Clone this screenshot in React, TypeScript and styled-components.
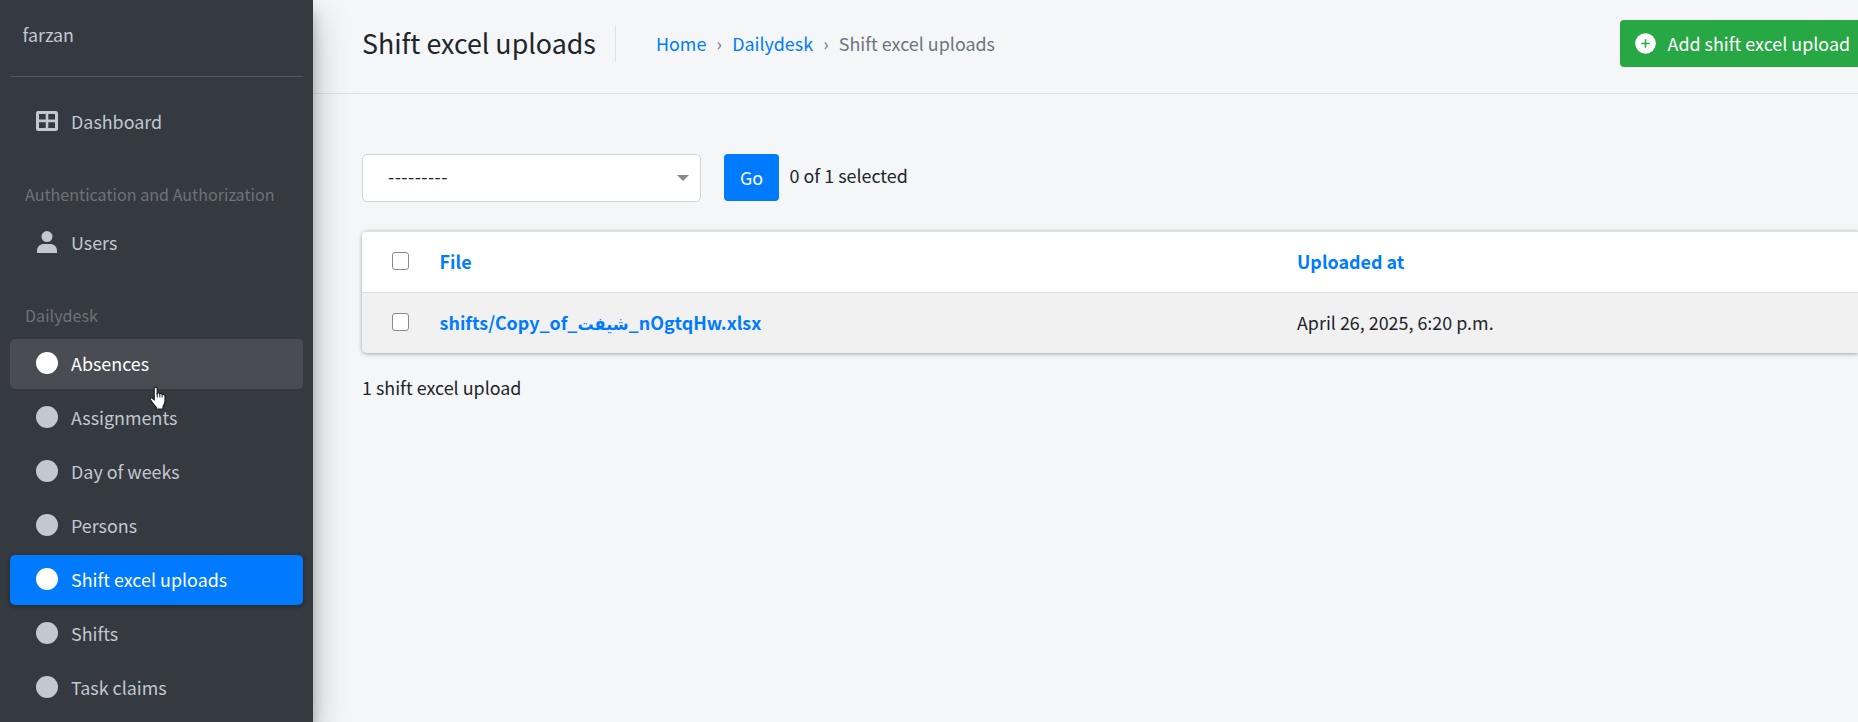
import React from "react";
import styled, { createGlobalStyle, css } from "styled-components";

const GlobalStyle = createGlobalStyle`
  *, *::before, *::after { box-sizing: border-box; }
  html, body, #root { height: 100%; }
  body {
    margin: 0;
    overflow: hidden;
    background: #f4f6f8;
    color: #212529;
    font-family: "Source Sans Pro", "Noto Sans CJK SC", "DejaVu Sans Condensed", "DejaVu Sans", sans-serif;
    font-size: 17.9px;
    line-height: 30px;
  }
  a { color: #007bff; text-decoration: none; }
`;

const Shell = styled.div`
  display: flex;
  height: 722px;
  width: 1858px;
  overflow: hidden;
`;

const Sidebar = styled.aside`
  position: relative;
  z-index: 1;
  flex: 0 0 313px;
  padding: 0 10px;
  background: #343a40;
  color: #c2c7d0;
  box-shadow: 0 17px 35px rgba(0, 0, 0, 0.25), 0 12px 12px rgba(0, 0, 0, 0.22);
`;

const UserPanel = styled.div`
  height: 77px;
  padding: 19px 12.6px 0;
  border-bottom: 1px solid #4f5962;
`;

const NavItem = styled.a<{ $state?: "hover" | "active" }>`
  display: flex;
  align-items: center;
  height: 50px;
  margin-bottom: 4px;
  padding: 0 0 2px 26px;
  gap: 13px;
  border-radius: 5px;
  color: #c2c7d0;
  svg { display: block; flex: none; margin-bottom: 1px; }
  ${(p) => p.$state === "hover" && css`
    background: #494d53;
    color: #fff;
  `}
  ${(p) => p.$state === "active" && css`
    background: #007bff;
    color: #fff;
    box-shadow: 0 1px 4px rgba(0, 0, 0, 0.4);
  `}
`;

const Nav = styled.nav`
  padding-top: 20px;
`;

const NavHeader = styled.div`
  height: 67px;
  padding: 28px 15px 0;
  color: #6c7277;
  font-size: 16.12px;
  line-height: 30px;
`;

const Cursor = styled.svg`
  position: absolute;
  left: 149px;
  top: 386px;
`;

const Main = styled.main`
  flex: 1;
  min-width: 0;
`;

const Header = styled.header`
  display: flex;
  align-items: flex-start;
  height: 94px;
  padding-left: 49px;
  border-bottom: 1px solid #dee2e6;
`;

const Title = styled.h1`
  margin: 25px 0 0;
  width: 254px;
  height: 37px;
  border-right: 1px solid #dee2e6;
  font-size: 26.8px;
  font-weight: 400;
  line-height: 36px;
  white-space: nowrap;
`;

const Breadcrumb = styled.div`
  display: flex;
  flex: 1;
  gap: 10.2px;
  margin: 28px 0 0 40px;
  color: #6c757d;
  white-space: nowrap;
`;

const AddButton = styled.a`
  display: flex;
  align-items: center;
  flex: 0 0 260px;
  width: 260px;
  height: 47px;
  margin: 20px -22px 0 0;
  padding: 0 0 2px 15px;
  gap: 11.5px;
  border-radius: 4px;
  background: #28a745;
  && { color: #fff; }
  white-space: nowrap;
  svg { margin-top: 1px; }
`;

const Content = styled.section`
  padding: 60px 0 0 49px;
`;

const Actions = styled.div`
  display: flex;
  align-items: flex-start;
`;

const Select = styled.div`
  display: flex;
  align-items: center;
  justify-content: space-between;
  width: 339px;
  height: 48px;
  padding: 0 11px 5px 25px;
  border: 1px solid #ced4da;
  border-radius: 5px;
  background: #fff;
  letter-spacing: 0.45px;
`;

const Arrow = styled.i`
  border: 6px solid transparent;
  border-top-color: #888;
  border-bottom: 0;
  margin-top: 4px;
`;

const GoButton = styled.a`
  width: 55px;
  height: 47px;
  margin: 0 10.6px 0 23px;
  border-radius: 4px;
  background: #007bff;
  && { color: #fff; }
  line-height: 47px;
  text-align: center;
`;

const Counter = styled.span`
  padding-top: 6px;
`;

const Table = styled.div`
  margin: 29px 0 19px;
  border-radius: 5px 0 0 5px;
  background: #fff;
  box-shadow: 0 0 1px rgba(0, 0, 0, 0.2), 0 1px 4px rgba(0, 0, 0, 0.32);
  overflow: hidden;
`;

const Row = styled.div<{ $shaded?: boolean }>`
  display: grid;
  grid-template-columns: 77.600px 857.400px 1fr;
  align-items: center;
  height: 61px;
  padding-bottom: 2px;
  background: ${(p) => (p.$shaded ? "#f1f1f1" : "#fff")};
  border-top: 1px solid #dee2e6;
`;

const Bold = styled.a`
  font-weight: 700;
`;

const Check = styled.span`
  width: 17px;
  height: 18px;
  margin-left: 30px;
  border: 1px solid #8a8a8a;
  border-radius: 3px;
  background: #fff;
`;

const Footer = styled.div``;

const Circle = () => (
  <svg width="22" height="22" viewBox="0 0 22 22">
    <circle cx="11" cy="11" r="11" fill="currentColor" />
  </svg>
);

const GridIcon = () => (
  <svg width="22" height="20" viewBox="0 0 22 20">
    <path
      fill="currentColor"
      fillRule="evenodd"
      d="M2.2 0h17.6A2.2 2.2 0 0 1 22 2.2v15.6a2.2 2.2 0 0 1-2.2 2.2H2.2A2.2 2.2 0 0 1 0 17.8V2.2A2.2 2.2 0 0 1 2.2 0ZM3 3v5.5h6.7V3Zm9.3 0v5.5H19V3ZM3 11.2V17h6.7v-5.8Zm9.3 0V17H19v-5.8Z"
    />
  </svg>
);

const UserIcon = () => (
  <svg width="22" height="22" viewBox="0 0 22 22">
    <circle cx="11" cy="5.6" r="5.5" fill="currentColor" />
    <path fill="currentColor" d="M1 22v-2.200C1 15.600 4.200 13 8 13h6c3.800 0 7 2.600 7 6.800V22Z" />
  </svg>
);

const PlusIcon = () => (
  <svg width="21" height="21" viewBox="0 0 21 21">
    <circle cx="10.500" cy="10.500" r="10.300" fill="#fff" />
    <path d="M10.500 6.300v8.400M6.300 10.500h8.400" stroke="#28a745" strokeWidth="1.500" />
  </svg>
);

const items: { label: string; state?: "hover" | "active" }[] = [
  { label: "Absences", state: "hover" },
  { label: "Assignments" },
  { label: "Day of weeks" },
  { label: "Persons" },
  { label: "Shift excel uploads", state: "active" },
  { label: "Shifts" },
  { label: "Task claims" },
];

export default function App() {
  return (
    <>
      <GlobalStyle />
      <Shell>
        <Sidebar>
          <UserPanel>farzan</UserPanel>
          <Nav>
            <NavItem><GridIcon />Dashboard</NavItem>
            <NavHeader>Authentication and Authorization</NavHeader>
            <NavItem><UserIcon />Users</NavItem>
            <NavHeader>Dailydesk</NavHeader>
            {items.map((it) => (
              <NavItem key={it.label} $state={it.state}>
                <Circle />
                {it.label}
              </NavItem>
            ))}
          </Nav>
          <Cursor width="18" height="25" viewBox="0 0 18 25">
            <path
              d="M5.200 2.300c0-1.700 3-1.700 3 0v5c.8-.9 2.300-.6 2.500.5.800-.7 2.200-.3 2.400.7 1.100-.7 2.900-.2 2.900 1.500v5.200c0 2.500-1.200 4-2 5.200V23H7.200v-1.800C5.500 19.500 3.500 16.500 1.400 13.800c-.9-1.300.6-2.600 1.900-1.600l1.900 1.600Z"
              fill="#fff"
              stroke="#1b1d20"
              strokeWidth="1.200"
            />
            <path d="M8.300 7v4.500M10.800 8v3.500M13.200 9v2.500" stroke="#1b1d20" strokeWidth="1" />
          </Cursor>
        </Sidebar>
        <Main>
          <Header>
            <Title>Shift excel uploads</Title>
            <Breadcrumb>
              <a>Home</a>
              <span>›</span>
              <a>Dailydesk</a>
              <span>›</span>
              <span>Shift excel uploads</span>
            </Breadcrumb>
            <AddButton><PlusIcon />Add shift excel upload</AddButton>
          </Header>
          <Content>
            <Actions>
              <Select>---------<Arrow /></Select>
              <GoButton>Go</GoButton>
              <Counter>0 of 1 selected</Counter>
            </Actions>
            <Table>
              <Row>
                <Check />
                <Bold>File</Bold>
                <Bold>Uploaded at</Bold>
              </Row>
              <Row $shaded>
                <Check />
                <Bold>shifts/Copy_of_شیفت_nOgtqHw.xlsx</Bold>
                <span>April 26, 2025, 6:20 p.m.</span>
              </Row>
            </Table>
            <Footer>1 shift excel upload</Footer>
          </Content>
        </Main>
      </Shell>
    </>
  );
}
